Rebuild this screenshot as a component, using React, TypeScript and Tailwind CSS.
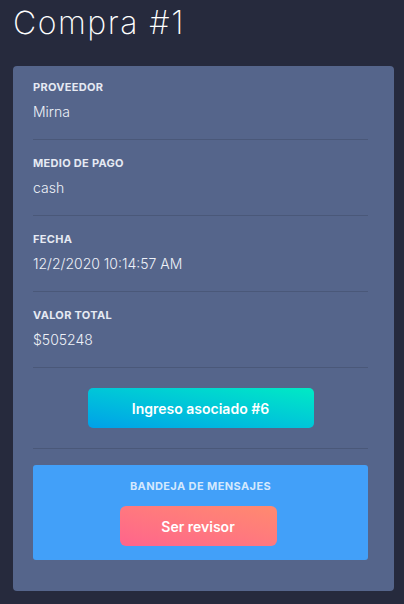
import React from "react";

const fields = [
  { label: "PROVEEDOR", value: "Mirna" },
  { label: "MEDIO DE PAGO", value: "cash" },
  { label: "FECHA", value: "12/2/2020 10:14:57 AM" },
  { label: "VALOR TOTAL", value: "$505248" },
];

const App = () => {
  return (
    <div
      className="min-h-[604px] w-full bg-[#262a3d] pl-[13px] pr-[10px] pb-[13px]"
      style={{ fontFamily: "Inter, 'Open Sans', sans-serif" }}
    >
      <h1 className="pt-[1px] text-[32px] leading-[44px] font-extralight text-white tracking-[1.5px]">
        Compra #1
      </h1>

      <div className="mt-[21px] rounded-[4px] bg-[#55658b] pl-[20px] pr-[26px] pb-[31px]">
        {fields.map((f, i) => (
          <div
            key={f.label}
            className={
              (i === 0 ? "pt-[13px]" : "pt-[15px]") +
              " pb-[17px] border-b border-[#4a5879]"
            }
          >
            <p className="text-[11px] leading-[16px] font-bold text-[#e6eaf3] tracking-[0.3px]">
              {f.label}
            </p>
            <p className="mt-[7px] text-[14px] leading-[20px] font-light text-[#eef1f8]">
              {f.value}
            </p>
          </div>
        ))}

        <div className="flex justify-center pt-[20px] pb-[20px] border-b border-[#4a5879]">
          <button className="w-[226px] h-[40px] rounded-[5px] bg-gradient-to-tr from-[#00a0e8] to-[#00eac4] text-white text-[14px] font-semibold">
            Ingreso asociado #6
          </button>
        </div>

        <div className="mt-[16px] rounded-[3px] bg-[#42a0f9] pt-[13px] pb-[14px] flex flex-col items-center">
          <p className="text-[11px] leading-[16px] font-bold text-[#d4e8fd] tracking-[0.4px]">
            BANDEJA DE MENSAJES
          </p>
          <button className="mt-[12px] mr-[5px] w-[157px] h-[40px] rounded-[6px] bg-gradient-to-tr from-[#ff648c] to-[#ff8a6e] text-white text-[14px] font-semibold">
            Ser revisor
          </button>
        </div>
      </div>
    </div>
  );
};

export default App;
